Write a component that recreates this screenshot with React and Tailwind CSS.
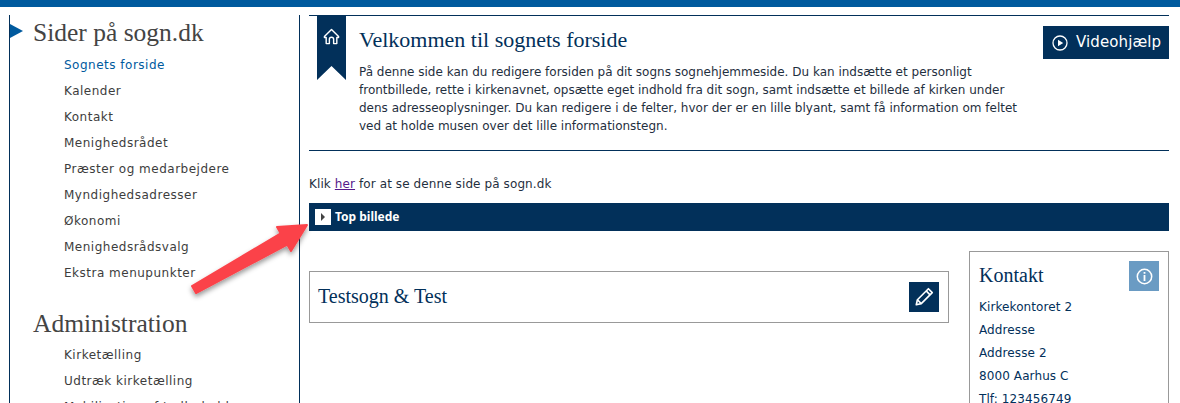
const pages = ['Sognets forside', 'Kalender', 'Kontakt', 'Menighedsrådet', 'Præster og medarbejdere', 'Myndighedsadresser', 'Økonomi', 'Menighedsrådsvalg', 'Ekstra menupunkter']
const admin = ['Kirketælling', 'Udtræk kirketælling', 'Mobilisation af tællerhold']
const contact = ['Kirkekontoret 2', 'Addresse', 'Addresse 2', '8000 Aarhus C', 'Tlf: 123456749']

const serif = "font-['Liberation_Serif',serif]"

function SideLink({ label, active }) {
  return (
    <a className={`block h-[26px] pl-[54px] leading-[26px] tracking-[0.5px] ${active ? 'text-[#005a9e]' : 'text-[#3d3d3d]'}`}>
      {label}
    </a>
  )
}

function Sidebar() {
  return (
    <aside className="relative h-[500px] w-[291px] shrink-0 border-x border-[#02305a] pt-[3px]">
      {/* active section marker */}
      <div className="absolute left-0 top-[9px] h-0 w-0 border-y-[7px] border-l-[13px] border-y-transparent border-l-[#005a9e]" />
      <h2 className={`${serif} pl-[23px] text-[25.5px] leading-[30px] text-[#444]`}>Sider på sogn.dk</h2>
      <nav className="mt-[4px]">
        {pages.map((p, i) => <SideLink key={p} label={p} active={i === 0} />)}
      </nav>
      <h2 className={`${serif} mt-[23px] pl-[23px] text-[25.5px] leading-[30px] text-[#444]`}>Administration</h2>
      <nav className="mt-[3px]">
        {admin.map(p => <SideLink key={p} label={p} />)}
      </nav>
    </aside>
  )
}

function Bookmark() {
  return (
    <div className="h-[64px] w-[29px] shrink-0 bg-[#02305a] pt-[12px] [clip-path:polygon(0_0,100%_0,100%_100%,50%_78%,0_100%)]">
      <svg className="mx-auto" width="17" height="17" viewBox="0 0 24 24" fill="none" stroke="white" strokeWidth="2" strokeLinejoin="round">
        <path d="M2 12 12 2l10 10v1.500h-2.500V22H15v-6a3 3 0 0 0-6 0v6H4.500v-8.500H2z" />
      </svg>
    </div>
  )
}

function Main() {
  return (
    <main className="ml-[9px] w-[860px] shrink-0">
      <section className="relative flex h-[136px] border-y border-[#02305a] pl-[8px]">
        <Bookmark />
        <div className="ml-[13px] w-[665px]">
          <h1 className={`${serif} mt-[10px] text-[22px] leading-[28px] text-[#02305a]`}>Velkommen til sognets forside</h1>
          <p className="mt-[9px] leading-[18px] text-[#1f2f40]">
            På denne side kan du redigere forsiden på dit sogns sognehjemmeside. Du kan indsætte et personligt
            frontbillede, rette i kirkenavnet, opsætte eget indhold fra dit sogn, samt indsætte et billede af kirken under
            dens adresseoplysninger. Du kan redigere i de felter, hvor der er en lille blyant, samt få information om feltet
            ved at holde musen over det lille informationstegn.
          </p>
        </div>
        <button className="absolute right-0 top-[10px] flex h-[33px] w-[126px] items-center gap-[8px] bg-[#02305a] pl-[9px] text-[15px] tracking-[0.1px] text-white">
          <svg width="16" height="16" viewBox="0 0 16 16" fill="none">
            <circle cx="8" cy="8" r="7" stroke="white" strokeWidth="1.300" />
            <path d="M6 4.800v6.400L11.200 8z" fill="white" />
          </svg>
          Videohjælp
        </button>
      </section>

      <p className="mt-[24px] leading-[18px] tracking-[0.1px] text-[#1f2f40]">
        Klik <a className="text-[#551a8b] underline">her</a> for at se denne side på sogn.dk
      </p>

      <div className="mt-[10px] flex h-[28px] items-center gap-[4px] bg-[#02305a] pl-[6px] font-['Noto_Sans',sans-serif] font-bold text-white">
        <span className="flex h-[16px] w-[16px] items-center justify-center bg-white">
          <span className="h-0 w-0 border-y-[4px] border-l-[4px] border-y-transparent border-l-[#444]" />
        </span>
        Top billede
      </div>

      <div className="mt-[20px] flex items-start gap-[20px]">
        <div className="mt-[20px] flex h-[52px] w-[640px] items-center justify-between border border-[#999] pl-[8px] pr-[9px]">
          <span className={`${serif} pb-[2px] text-[20px] text-[#02305a]`}>Testsogn &amp; Test</span>
          <span className="flex h-[30px] w-[30px] items-center justify-center bg-[#02305a]">
            <svg width="22" height="22" viewBox="0 0 20 20" fill="none" stroke="white" strokeWidth="1.500" strokeLinejoin="round">
              <path d="M3 17l1-4.500L14 2.500l3.500 3.500-10 10z" />
              <path d="M12 4.500 15.500 8M4 12.500 7.500 16" />
            </svg>
          </span>
        </div>
        <div className="relative h-[200px] w-[200px] border border-[#999] pl-[9px] pt-[9px]">
          <h3 className={`${serif} text-[20px] leading-[28px] text-[#02305a]`}>Kontakt</h3>
          <span className="absolute right-[9px] top-[9px] flex h-[30px] w-[30px] items-center justify-center bg-[#6a9bc3]">
            <svg width="17" height="17" viewBox="0 0 17 17" fill="none">
              <circle cx="8.500" cy="8.500" r="7.200" stroke="white" strokeWidth="1.500" />
              <path d="M7.600 4h1.800v1.800H7.600zM7.600 7h1.800v6H7.600z" fill="white" />
            </svg>
          </span>
          <ul className="mt-[7px]">
            {contact.map(c => <li key={c} className="h-[23px] leading-[23px] tracking-[0.1px] text-[#02305a]">{c}</li>)}
          </ul>
        </div>
      </div>
    </main>
  )
}

export default function App() {
  return (
    <div className="relative h-[403px] w-[1180px] overflow-hidden bg-white font-['DejaVu_Sans',sans-serif] text-[12px]">
      <div className="h-[7px] bg-[#005a9e]" />
      <div className="mt-[8px] flex pl-[9px]">
        <Sidebar />
        <Main />
      </div>
      {/* annotation arrow pasted over the screenshot */}
      <svg className="absolute left-[180px] top-[215px]" width="140" height="90" viewBox="0 0 140 90">
        <defs>
          <filter id="arrowShadow" x="-20%" y="-20%" width="140%" height="150%">
            <feDropShadow dx="0" dy="3" stdDeviation="2.500" floodColor="#000" floodOpacity="0.4" />
          </filter>
        </defs>
        <g fill="#fb4349" stroke="#fb4349" strokeWidth="2" strokeLinejoin="round" filter="url(#arrowShadow)">
          <path d="M12 71 L100.700 18.400 L107.300 29.600 L16 78 Z" />
          <path d="M127 10 L97 12 L111 36 Z" />
        </g>
      </svg>
    </div>
  )
}
